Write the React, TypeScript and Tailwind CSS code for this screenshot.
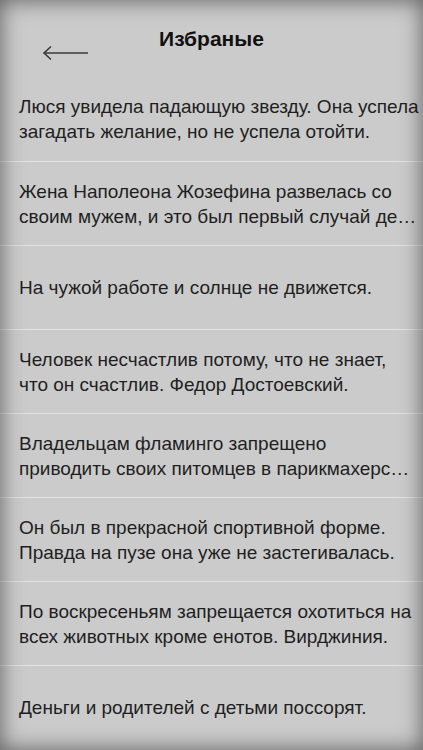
const quotes: string[][] = [
  ["Люся увидела падающую звезду. Она успела", "загадать желание, но не успела отойти."],
  ["Жена Наполеона Жозефина развелась со", "своим мужем, и это был первый случай де…"],
  ["На чужой работе и солнце не движется."],
  ["Человек несчастлив потому, что не знает,", "что он счастлив. Федор Достоевский."],
  ["Владельцам фламинго запрещено", "приводить своих питомцев в парикмахерс…"],
  ["Он был в прекрасной спортивной форме.", "Правда на пузе она уже не застегивалась."],
  ["По воскресеньям запрещается охотиться на", "всех животных кроме енотов. Вирджиния."],
  ["Деньги и родителей с детьми поссорят."],
];

export default function App() {
  return (
    <div className="relative w-[423px] h-[750px] overflow-hidden bg-[#cbcbcb] font-['Liberation_Sans',Arial,sans-serif] text-[#222]">
      <div className="relative h-[77px] flex items-center justify-center">
        <svg className="absolute left-[42px] top-[45px]" width="48" height="16" viewBox="0 0 48 16">
          <path d="M2 8 H46" stroke="#3a3a3a" strokeWidth="1.6" />
          <path d="M9 1.5 L2 8 L9 14.5" stroke="#3a3a3a" strokeWidth="1.6" fill="none" />
        </svg>
        <h1 className="text-[21px] font-bold text-[#111]">Избраные</h1>
      </div>
      <div className="flex flex-col">
        {quotes.map((lines, i) => (
          <div
            key={i}
            className={`h-[84px] flex flex-col justify-center px-[19px] ${i > 0 ? "border-t border-[#e2e2e2]" : ""}`}
          >
            {lines.map((l, j) => (
              <p key={j} className="text-[19px] leading-[25px] text-[#1f1f1f] whitespace-nowrap">{l}</p>
            ))}
          </div>
        ))}
      </div>
      <div className="pointer-events-none absolute inset-0 shadow-[inset_0_0_22px_rgba(0,0,0,0.55)]" />
    </div>
  );
}
